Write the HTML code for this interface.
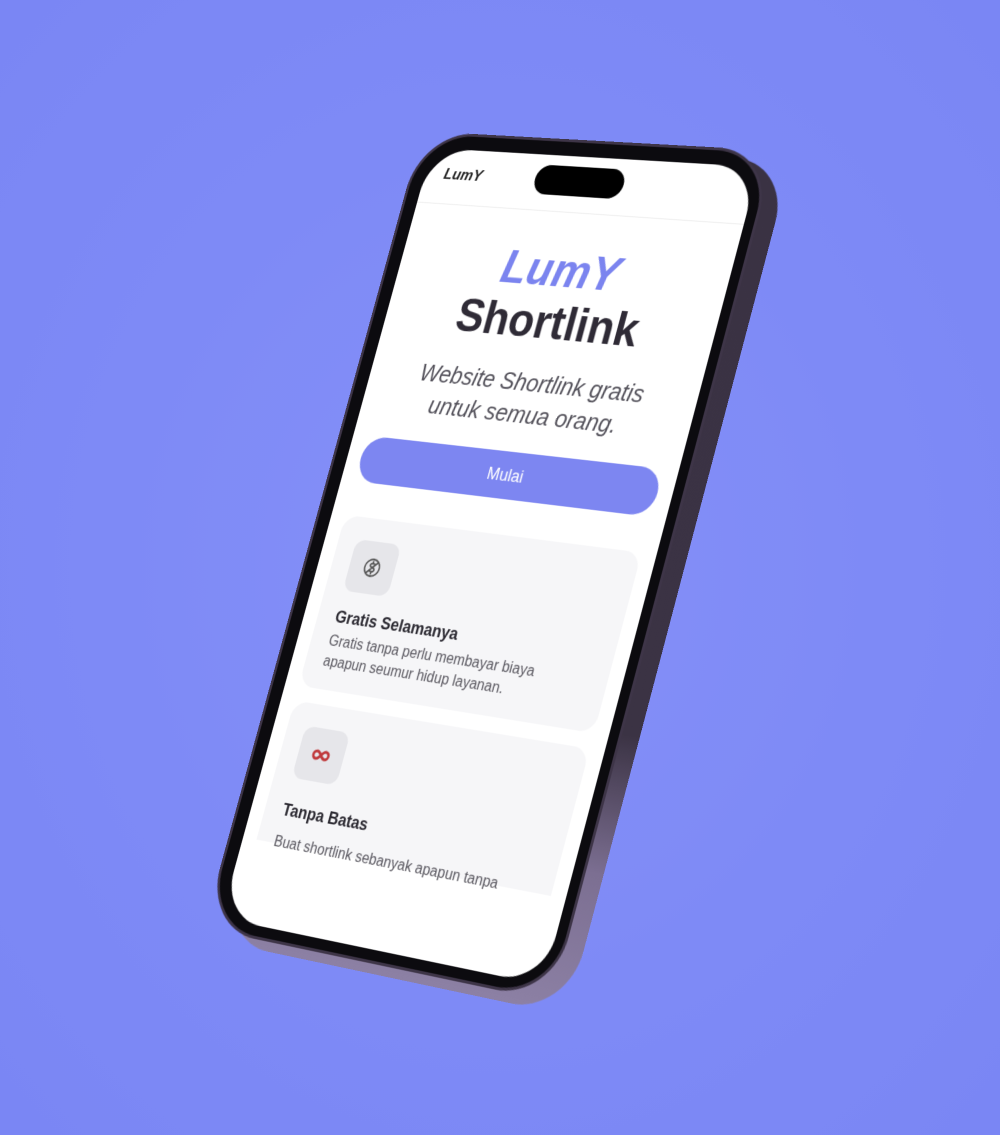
<!DOCTYPE html>
<html><head><meta charset="utf-8"><style>
html,body{margin:0;padding:0}
body{width:1000px;height:1135px;overflow:hidden;position:relative;background:radial-gradient(ellipse at 50% 50%,#8590f8 0%,#7e8af6 55%,#7a86f4 100%);font-family:"Liberation Sans",sans-serif}
#w{position:absolute;left:0;top:0;width:390px;height:844px;transform-origin:0 0;transform:matrix3d(0.72787,0.024385,0,-0.00014572,-0.25591,0.88775,0,-0.000026766,0,0,1,0,432,148,0,1)}
.side{position:absolute;left:4px;top:-8px;width:420px;height:876px;border-radius:64px;background:linear-gradient(180deg,#3a3243 0%,#3b3344 68%,#7c6f92 84%,#8c80a4 100%)}
.bez{position:absolute;left:-15px;top:-15px;width:416px;height:870px;border-radius:62px;background:#0c0b0f;box-shadow:0 0 0 3px #3e3548}
.scr{position:absolute;left:0;top:0;width:390px;height:844px;border-radius:50px;background:#fff;overflow:hidden}
.notch{position:absolute;left:136px;top:11px;width:106px;height:32px;border-radius:16px;background:#000}
.logo{position:absolute;left:24px;top:18px;font-weight:bold;font-style:italic;font-size:17px;color:#222}
.line{position:absolute;left:0;right:0;top:60px;height:1px;background:#eee}
.t1{position:absolute;left:0;right:0;top:94px;text-align:center;font-weight:bold;font-style:italic;font-size:50px;color:#7b84ef}
.t2{position:absolute;left:0;right:0;top:150px;text-align:center;font-weight:bold;font-size:50px;color:#2f2b36}
.sub{position:absolute;left:0;right:0;top:228px;text-align:center;font-style:italic;font-size:25.5px;line-height:34px;color:#55535c}
.btn{position:absolute;left:17px;width:356px;top:318px;height:50px;border-radius:25px;background:#7d86f1;color:#fff;text-align:center;line-height:50px;font-size:18px}
.card{position:absolute;left:17px;width:356px;border-radius:18px;background:#f6f6f8}
.ic{position:absolute;left:22px;top:24px;width:56px;height:56px;border-radius:12px;background:#e6e6ea}
.ic svg{position:absolute;left:14px;top:14px}
.ct{position:absolute;left:22px;top:98px;font-weight:bold;font-size:18px;color:#2a2830}
.cd{position:absolute;left:22px;top:124px;width:290px;font-size:16px;line-height:22px;color:#5a5860}
</style></head><body>
<div id="w">
 <div class="side"></div>
 <div class="bez"></div>
 <div class="scr">
  <div class="notch"></div>
  <div class="logo">LumY</div>
  <div class="line"></div>
  <div class="t1">LumY</div>
  <div class="t2">Shortlink</div>
  <div class="sub">Website Shortlink gratis<br>untuk semua orang.</div>
  <div class="btn">Mulai</div>
  <div class="card" style="top:405px;height:186px">
   <div class="ic"><svg width="28" height="28" viewBox="0 0 28 28" fill="none" stroke="#555" stroke-width="1.8" stroke-linecap="round"><circle cx="14" cy="14" r="9"/><path d="M17 10.5c-.8-.8-1.8-1.2-3-1.2-1.6 0-2.8.9-2.8 2.1 0 2.8 5.8 1.6 5.8 4.6 0 1.3-1.3 2.2-3 2.2-1.3 0-2.4-.5-3.2-1.3M14 7.5v2M14 18.5v2M8 20L20 8"/></svg></div>
   <div class="ct">Gratis Selamanya</div>
   <div class="cd">Gratis tanpa perlu membayar biaya apapun seumur hidup layanan.</div>
  </div>
  <div class="card" style="top:607px;height:150px;border-radius:18px 18px 0 0">
   <div class="ic"><svg width="28" height="28" viewBox="0 0 28 28" fill="none" stroke="#c0393b" stroke-width="3"><path d="M14 14c-2-2.6-3.4-4-5.3-4a4 4 0 0 0 0 8c1.9 0 3.3-1.4 5.3-4s3.4-4 5.3-4a4 4 0 0 1 0 8c-1.9 0-3.3-1.4-5.3-4z"/></svg></div>
   <div class="ct" style="top:104px">Tanpa Batas</div>
   <div class="cd" style="top:138px;width:340px">Buat shortlink sebanyak apapun tanpa</div>
  </div>
 </div>
</div>
</body></html>
